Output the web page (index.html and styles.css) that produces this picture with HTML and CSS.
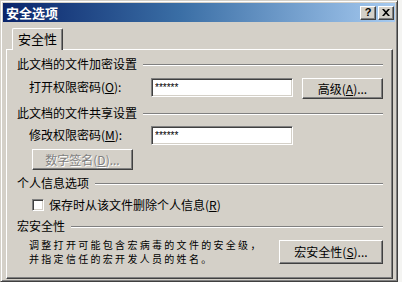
FILE: index.html
```html
<!DOCTYPE html>
<html lang="zh-CN">
<head>
  <meta charset="UTF-8">
  <title>安全选项</title>
  <link rel="stylesheet" href="styles.css">
</head>
<body>
  <div class="window">
    <div class="titlebar">
      <div class="title">安全选项</div>
      <div class="caption-buttons">
        <div class="caption-btn help">?</div>
        <div class="caption-btn close">
          <svg width="8" height="7" viewBox="0 0 8 7">
            <path d="M0 0h2l2 2.2L6 0h2L5 3.5 8 7H6L4 4.8 2 7H0l3-3.5z" fill="#000"/>
          </svg>
        </div>
      </div>
    </div>

    <div class="tabs">
      <div class="tab active">安全性</div>
    </div>

    <div class="panel">
      <div class="group-title">
        <span>此文档的文件加密设置</span>
        <div class="rule"></div>
      </div>
      <div class="field-row first">
        <div class="field-label">打开权限密码(<u>O</u>):</div>
        <input class="text-box" type="text" value="******" readonly>
        <button class="btn btn-advanced">高级(<u>A</u>)...</button>
      </div>

      <div class="group-title">
        <span>此文档的文件共享设置</span>
        <div class="rule"></div>
      </div>
      <div class="field-row second">
        <div class="field-label">修改权限密码(<u>M</u>):</div>
        <input class="text-box" type="text" value="******" readonly>
      </div>
      <button class="btn btn-sign" disabled>数字签名(<u>D</u>)...</button>

      <div class="group-title">
        <span>个人信息选项</span>
        <div class="rule"></div>
      </div>
      <label class="check-row">
        <span class="check-box"></span>
        <span>保存时从该文件删除个人信息(<u>R</u>)</span>
      </label>

      <div class="group-title">
        <span>宏安全性</span>
        <div class="rule"></div>
      </div>
      <div class="macro-row">
        <div class="macro-text">
          调整打开可能包含宏病毒的文件的安全级，<br>
          并指定信任的宏开发人员的姓名。
        </div>
        <button class="btn btn-macro">宏安全性(<u>S</u>)...</button>
      </div>
    </div>
  </div>
</body>
</html>
```

FILE: styles.css
```css
body {
  margin: 0;
  background-color: #f4f4f2;
  font-family: "Noto Sans CJK SC", "Liberation Sans", sans-serif;
  font-size: 12px;
  color: #000;
}
.window {
  box-sizing: border-box;
  width: 398px;
  height: 282px;
  background-color: #d4d0c8;
  border: 1px solid;
  border-color: #d4d0c8 #404040 #404040 #d4d0c8;
  box-shadow: inset 1px 1px #fff, inset -1px -1px #808080;
  padding: 2px 2px 0 2px;
}
.titlebar {
  height: 19px;
  background: linear-gradient(to right, #0a246a, #3a6ea5 45%, #a6caf0);
  display: flex;
  align-items: center;
  justify-content: space-between;
  padding: 0 1px 0 3px;
}
.title {
  color: #fff;
  font-weight: bold;
  font-size: 13px;
  line-height: 15px;
}
.caption-buttons {
  display: flex;
  gap: 2px;
}
.caption-btn {
  box-sizing: border-box;
  width: 16px;
  height: 14px;
  background-color: #d4d0c8;
  border: 1px solid;
  border-color: #fff #404040 #404040 #fff;
  box-shadow: inset -1px -1px #808080;
  display: flex;
  align-items: center;
  justify-content: center;
}
.help {
  font-family: "Liberation Sans", sans-serif;
  font-weight: bold;
  font-size: 11px;
  line-height: 11px;
}
.tabs {
  display: flex;
  padding: 6px 0 0 9px;
  position: relative;
  z-index: 1;
}
.tab {
  box-sizing: border-box;
  height: 22px;
  padding: 0 5px;
  border: 1px solid;
  border-bottom: none;
  border-color: #fff #404040 #404040 #fff;
  border-radius: 2px 2px 0 0;
  box-shadow: inset -1px 0 #808080;
  background-color: #d4d0c8;
  font-size: 13px;
  line-height: 19px;
  margin-bottom: -1px;
  white-space: nowrap;
}
.panel {
  box-sizing: border-box;
  margin-left: 3px;
  width: 387px;
  height: 230px;
  border: 1px solid;
  border-color: #fff #404040 #404040 #fff;
  box-shadow: inset -1px -1px #808080;
  padding: 7px 9px 0 10px;
}
.group-title {
  display: flex;
  align-items: center;
  height: 14px;
  line-height: 14px;
  gap: 6px;
}
.rule {
  flex: 1;
  border-top: 1px solid #808080;
  border-bottom: 1px solid #fff;
  margin-top: 1px;
}
.field-row {
  display: flex;
  align-items: flex-start;
  margin-left: 12px;
}
.field-row.first {
  margin-top: 7px;
  margin-bottom: 7px;
}
.field-row.second {
  margin-top: 6px;
}
.field-label {
  width: 122px;
  line-height: 18px;
}
.text-box {
  box-sizing: border-box;
  width: 142px;
  height: 19px;
  margin: 0;
  padding: 0 3px;
  border: 1px solid;
  border-color: #808080 #fff #fff #808080;
  box-shadow: inset 1px 1px #404040, inset -1px -1px #d4d0c8;
  background-color: #fff;
  font-family: "Liberation Sans", sans-serif;
  font-size: 10px;
  outline: none;
}
.btn {
  box-sizing: border-box;
  margin: 0;
  padding: 0;
  background-color: #d4d0c8;
  border: 1px solid;
  border-color: #fff #404040 #404040 #fff;
  box-shadow: inset -1px -1px #808080;
  font-family: "Noto Sans CJK SC", "Liberation Sans", sans-serif;
  font-size: 12px;
  color: #000;
  line-height: 14px;
}
.btn-advanced {
  width: 81px;
  height: 21px;
  margin-left: 9px;
}
.btn-sign {
  display: block;
  width: 101px;
  height: 21px;
  margin: 4px 0 6px 15px;
  color: #808080;
  text-shadow: 1px 1px #fff;
}
.check-row {
  display: flex;
  align-items: center;
  gap: 5px;
  margin: 8px 0 8px 15px;
  height: 13px;
  line-height: 13px;
}
.check-box {
  box-sizing: border-box;
  width: 12px;
  height: 12px;
  background-color: #fff;
  border: 1px solid;
  border-color: #808080 #fff #fff #808080;
  box-shadow: inset 1px 1px #404040, inset -1px -1px #d4d0c8;
}
.macro-row {
  display: flex;
  align-items: center;
  margin-top: 5px;
}
.macro-text {
  margin-left: 12px;
  font-size: 10px;
  letter-spacing: 2.3px;
  line-height: 14px;
}
.btn-macro {
  margin-left: auto;
  width: 104px;
  height: 24px;
}
```
